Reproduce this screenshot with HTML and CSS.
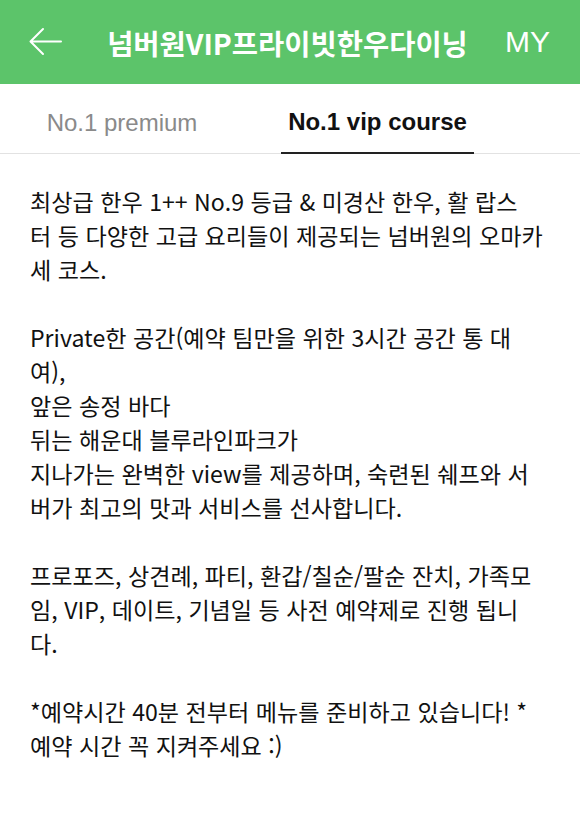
FILE: index.html
```html
<!DOCTYPE html>
<html lang="ko">
<head>
<meta charset="utf-8">
<link rel="stylesheet" href="styles.css">
</head>
<body>
<header class="topbar">
  <svg class="back" width="36" height="32" viewBox="0 0 36 32" aria-hidden="true">
    <path d="M33 15.5 H3 M15 3 L2.5 15.5 L15 28" fill="none" stroke="#fff" stroke-width="2" stroke-linecap="round" stroke-linejoin="round"/>
  </svg>
  <h1 class="title">넘버원VIP프라이빗한우다이닝</h1>
  <span class="my">MY</span>
</header>
<nav class="tabs">
  <div class="tab">No.1 premium</div>
  <div class="tab active">No.1 vip course</div>
</nav>
<main class="content">
  <p>최상급 한우 1++ No.9 등급 &amp; 미경산 한우, 활 랍스<br>터 등 다양한 고급 요리들이 제공되는 넘버원의 오마카<br>세 코스.</p>
  <p>Private한 공간(예약 팀만을 위한 3시간 공간 통 대<br>여),<br>앞은 송정 바다<br>뒤는 해운대 블루라인파크가<br>지나가는 완벽한 view를 제공하며, 숙련된 쉐프와 서<br>버가 최고의 맛과 서비스를 선사합니다.</p>
  <p>프로포즈, 상견례, 파티, 환갑/칠순/팔순 잔치, 가족모<br>임, VIP, 데이트, 기념일 등 사전 예약제로 진행 됩니<br>다.</p>
  <p>*예약시간 40분 전부터 메뉴를 준비하고 있습니다! *<br>예약 시간 꼭 지켜주세요 :)</p>
</main>
</body>
</html>
```
FILE: styles.css
```css
html, body {
  margin: 0;
  padding: 0;
  background: #fff;
}
body {
  width: 580px;
  font-family: "Noto Sans CJK KR", "Noto Sans", sans-serif;
  color: #111;
}
.topbar {
  height: 84px;
  background: #5cc46a;
  display: flex;
  align-items: center;
  padding: 0 30px 0 28px;
  box-sizing: border-box;
  color: #fff;
}
.back {
  flex: none;
  display: block;
}
.title {
  flex: 1;
  margin: 0;
  font-size: 28.5px;
  font-weight: 700;
  text-align: center;
  letter-spacing: 0;
  padding-left: 6px;
}
.my {
  flex: none;
  font-family: "Liberation Sans", "Noto Sans", sans-serif;
  font-size: 30px;
}
.tabs {
  height: 70px;
  display: flex;
  border-bottom: 1px solid #e2e2e2;
  box-sizing: border-box;
}
.tab {
  font-family: "Liberation Sans", "Noto Sans", sans-serif;
  font-size: 24px;
  color: #8a8a8a;
  display: flex;
  align-items: center;
  justify-content: center;
  box-sizing: border-box;
  padding-top: 8px;
}
.tab:first-child {
  width: 244px;
}
.tab.active {
  width: 193px;
  margin-left: 37px;
  color: #111;
  font-weight: 700;
  border-bottom: 2px solid #222;
  margin-bottom: -1px;
}
.content {
  padding: 30px 30px 20px 30px;
  font-size: 23.1px;
  line-height: 34px;
  letter-spacing: 0;
}
.content p {
  margin: 0 0 34px 0;
  white-space: nowrap;
}
```
